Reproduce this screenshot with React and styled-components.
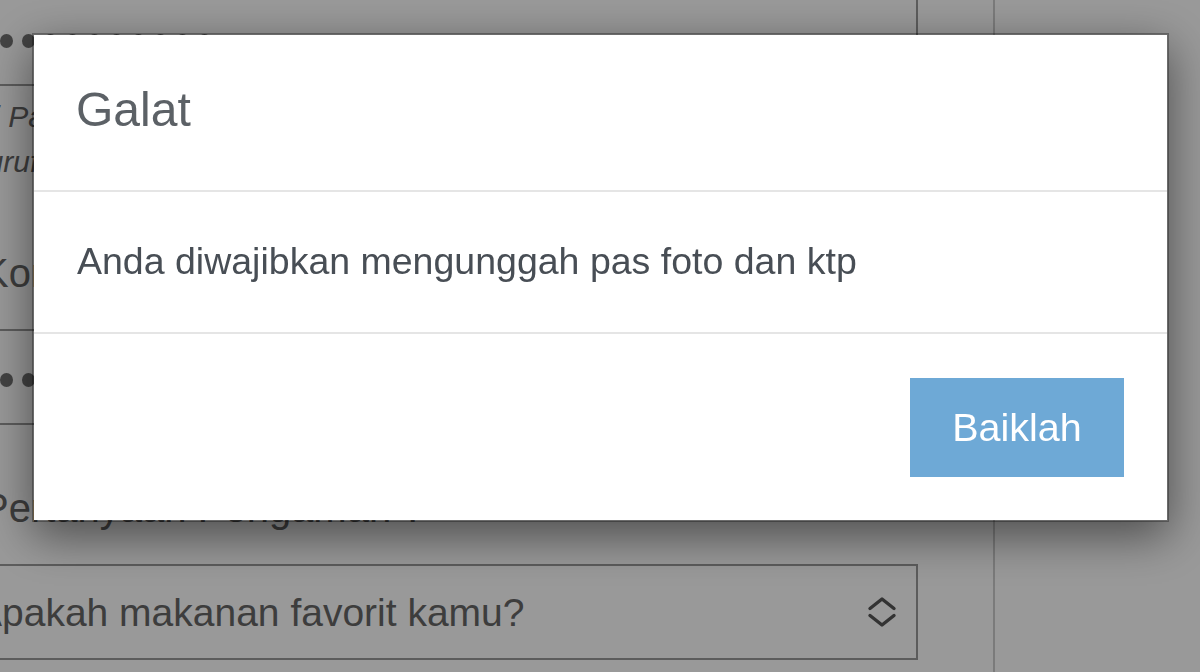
import React from "react";
import styled, { createGlobalStyle } from "styled-components";

const GlobalStyle = createGlobalStyle`
  html, body {
    margin: 0;
    padding: 0;
  }
  body {
    font-family: "Liberation Sans", Arial, Helvetica, sans-serif;
    background: #fff;
    overflow: hidden;
  }
`;

const Page = styled.div`
  display: flex;
  width: 1200px;
  height: 672px;
  overflow: hidden;
  background: #fff;
`;

const Main = styled.main`
  flex: 0 0 1035px;
  margin-left: -40px;
  padding: 0 75px 0 10px;
  box-sizing: border-box;
  border-right: 2px solid #cdcdcd;
`;

const Sidebar = styled.aside`
  flex: 1;
`;

const PasswordField = styled.div`
  display: flex;
  align-items: center;
  gap: 9px;
  height: 96px;
  box-sizing: border-box;
  margin-top: ${(p) => (p.$first ? "-10px" : "0")};
  padding: 5px 0 0 28px;
  border: 2px solid #9a9a9a;
`;

const Dot = styled.span`
  width: 13px;
  height: 14px;
  border-radius: 50%;
  background: #707070;
`;

const HelpText = styled.p`
  margin: 8px 0 0;
  font-size: 30px;
  line-height: 45px;
  font-style: italic;
  color: #666;
  white-space: nowrap;

  span {
    display: block;
  }
`;

const Label = styled.label`
  display: block;
  margin: ${(p) => p.$top}px 0 28px;
  padding-left: 12px;
  font-size: 40px;
  line-height: 56px;
  color: #666;
  white-space: nowrap;
`;

const SelectBox = styled.div`
  display: flex;
  align-items: center;
  justify-content: space-between;
  height: 96px;
  box-sizing: border-box;
  padding: 0 19px 0 4px;
  border: 2px solid #9a9a9a;
  font-size: 39px;
  line-height: 1;
  color: #666;
  white-space: nowrap;
`;

const Backdrop = styled.div`
  position: fixed;
  inset: 0;
  background: rgba(0, 0, 0, 0.4);
`;

const Dialog = styled.div`
  width: 1137px;
  margin: 33px 0 0 32px;
  box-sizing: border-box;
  background: #fff;
  background-clip: padding-box;
  border: 2px solid rgba(0, 0, 0, 0.3);
  box-shadow: 0 14px 44px rgba(0, 0, 0, 0.5);
`;

const DialogHeader = styled.div`
  display: flex;
  align-items: center;
  height: 157px;
  padding: 0 42px 5px;
  box-sizing: border-box;
  border-bottom: 2px solid #e5e5e5;
`;

const Title = styled.h4`
  margin: 0;
  font-size: 48px;
  font-weight: 400;
  line-height: 1;
  color: #5c6166;
`;

const DialogBody = styled.div`
  display: flex;
  align-items: center;
  height: 140px;
  padding: 0 43px;
  border-bottom: 2px solid #e5e5e5;
  font-size: 37.5px;
  line-height: 1;
  color: #484e55;
`;

const DialogFooter = styled.div`
  display: flex;
  align-items: center;
  justify-content: flex-end;
  height: 186px;
  padding: 0 43px;
`;

const Button = styled.button`
  width: 214px;
  height: 99px;
  border: none;
  border-radius: 0;
  background: #6ea9d6;
  color: #fff;
  font-family: inherit;
  font-size: 39.5px;
  cursor: pointer;
`;

const Chevrons = () => (
  <svg width="30" height="32" viewBox="0 0 30 32" fill="none">
    <polyline points="3,12.5 15,3 27,12.5" stroke="#555" strokeWidth="3.4" strokeLinecap="round" strokeLinejoin="round" />
    <polyline points="3,19.5 15,29 27,19.5" stroke="#555" strokeWidth="3.4" strokeLinecap="round" strokeLinejoin="round" />
  </svg>
);

const Dots = ({ count }) => (
  <>
    {Array.from({ length: count }).map((_, i) => (
      <Dot key={i} />
    ))}
  </>
);

export default function App() {
  return (
    <>
      <GlobalStyle />
      <Page>
        <Main>
          <PasswordField $first>
            <Dots count={10} />
          </PasswordField>
          <HelpText>
            <span>Isi Password dengan kombinasi huruf besar, huruf kecil</span>
            <span>huruf kecil dan angka minimal 8 karakter</span>
          </HelpText>
          <Label $top={61}>Konfirmasi Password</Label>
          <PasswordField>
            <Dots count={10} />
          </PasswordField>
          <Label $top={55}>Pertanyaan Pengaman ?</Label>
          <SelectBox>
            <span>Apakah makanan favorit kamu?</span>
            <Chevrons />
          </SelectBox>
        </Main>
        <Sidebar />
      </Page>
      <Backdrop>
        <Dialog role="dialog">
          <DialogHeader>
            <Title>Galat</Title>
          </DialogHeader>
          <DialogBody>Anda diwajibkan mengunggah pas foto dan ktp</DialogBody>
          <DialogFooter>
            <Button>Baiklah</Button>
          </DialogFooter>
        </Dialog>
      </Backdrop>
    </>
  );
}
